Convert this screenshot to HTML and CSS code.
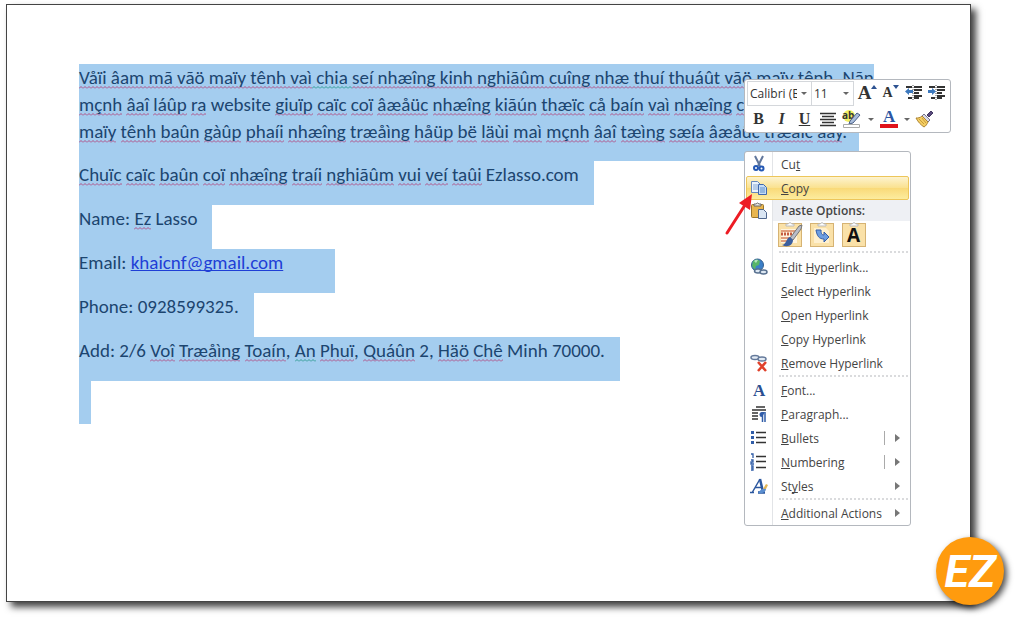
FILE: index.html
```html
<!DOCTYPE html>
<html lang="vi">
<head>
<meta charset="utf-8">
<meta name="viewport" content="width=device-width, initial-scale=1">
<title>Copy text in Word</title>
<link rel="stylesheet" href="styles.css">
</head>
<body>
<main class="sheet">
  <article class="doc">
    <p class="lines">
      <span class="line"><u>Våïi âam mã vãö maïy tênh vaì</u><u class="grammar"> chia </u><u>seí nhæîng kinh nghiãûm cuîng nhæ thuí thuáût vãö maïy tênh.</u> <u>Nãn</u></span>
      <span class="line"><u>mçnh</u> <u>âaî</u> <u>láûp</u> <u>ra</u> website <u>giuïp</u> <u>caïc</u> <u>coï</u> <u>âæåüc</u> <u>nhæîng</u> <u>kiãún</u> <u>thæïc</u> <u>cå</u> <u>baín</u> <u>vaì</u> <u>nhæîng</u> <u>caïch</u> <u>maì</u></span>
      <span class="line"><u>maïy</u> <u>tênh</u> <u>baûn</u> <u>gàûp</u> <u>phaíi</u> <u>nhæîng</u> <u>træåìng</u> <u>håüp</u> <u>bë</u> <u>läùi</u> <u>maì</u> <u>mçnh</u> <u>âaî</u> <u>tæìng</u> <u>sæía</u> <u>âæåüc</u> <u>træåïc</u> <u>âáy</u>.</span>
    </p>
    <p><u>Chuïc</u> <u>caïc</u> <u>baûn</u> <u>coï</u> <u>nhæîng</u> <u>traíi</u> <u>nghiãûm</u> <u>vui</u> <u>veí</u> <u>taûi</u> Ezlasso.com</p>
    <p>Name: <u>Ez</u> Lasso</p>
    <p class="trailing">Email: <a href="mailto:khaicnf@gmail.com">khaicnf@gmail.com</a></p>
    <p>Phone: 0928599325.</p>
    <p>Add: 2/6 <u>Voî</u> <u>Træåìng</u> <u>Toaín</u>, <u class="grammar">An</u> <u>Phuï</u>, <u>Quáûn</u> 2, <u>Häö</u> <u>Chê</u> Minh 70000.</p>
    <p class="empty"></p>
  </article>

  <section class="toolbar" aria-label="Formatting">
    <div class="row">
      <label class="combo name"><select aria-label="Font"><option>Calibri (Body)</option></select></label>
      <label class="combo size"><select aria-label="Font size"><option>11</option></select></label>
      <button class="tool" aria-label="Grow font"><span class="grow">A</span><svg class="tip" width="6" height="4" viewBox="0 0 6 4"><path d="M0 4 3 0l3 4z" fill="#2d5291"/></svg></button>
      <button class="tool" aria-label="Shrink font"><span class="shrink">A</span><svg class="tip" width="6" height="4" viewBox="0 0 6 4"><path d="M0 0h6L3 4z" fill="#2d5291"/></svg></button>
      <button class="tool" aria-label="Decrease indent"><svg width="18" height="18" viewBox="0 0 18 18"><path d="M1 3h6M9 3h8M9 6h8M9 9h5M9 12h8M3 14h4M9 14h5" stroke="#333" stroke-width="2"/><path d="M8 1v16" stroke="#555" stroke-dasharray="1 1"/><path d="M0 7.500 4 4v2h4v3H4v2z" fill="#3c78bd"/></svg></button>
      <button class="tool" aria-label="Increase indent"><svg width="18" height="18" viewBox="0 0 18 18"><path d="M1 3h6M9 3h8M9 6h8M9 9h5M9 12h8M3 14h4M9 14h5" stroke="#333" stroke-width="2"/><path d="M8 1v16" stroke="#555" stroke-dasharray="1 1"/><path d="M8 7.500 4 4v2H0v3h4v2z" fill="#3c78bd"/></svg></button>
    </div>
    <div class="row">
      <button class="tool letter bold" aria-label="Bold">B</button>
      <button class="tool letter italic" aria-label="Italic">I</button>
      <button class="tool letter underline" aria-label="Underline">U</button>
      <button class="tool" aria-label="Center"><svg width="16" height="14" viewBox="0 0 16 14"><path d="M0 1.500h16M2 4.500h12M0 7.500h16M2 10.500h12M0 13.500h16" stroke="#333" stroke-width="1.500"/></svg></button>
      <button class="tool split" aria-label="Highlight color"><svg width="20" height="20" viewBox="0 0 20 20"><circle cx="7" cy="7" r="6" fill="#f3ef62"/><text x="0" y="10" font-size="10" font-weight="bold" fill="#333">ab</text><path d="m8 12 7-8 3 2-7 8-4 1z" fill="#a9bddb" stroke="#495f86"/><path d="M1.500 15.500h16v3h-16z" fill="#fff" stroke="#aaa"/></svg><i class="drop"></i></button>
      <button class="tool split" aria-label="Font color"><svg width="18" height="20" viewBox="0 0 18 20"><text class="serif" x="3" y="13" font-size="17" font-weight="bold" fill="#2c56a3">A</text><path d="M0 15h18v4H0z" fill="#e0131b"/></svg><i class="drop"></i></button>
      <button class="tool" aria-label="Format painter"><svg width="19" height="18" viewBox="0 0 19 18"><path d="m12 5 4-4 2 2-4 4z" fill="#594a7d" stroke="#443963"/><path d="m9 4 6 6-2 2-6-6z" fill="#d9d9e4" stroke="#77758b"/><path d="M7 6c-2 2-4 2-6 2 2 4 5 7 8 9 2-1 3-3 4-5z" fill="#f4ce62" stroke="#ae8431"/><path d="m4 9 5 5M7 8l4 5" stroke="#c89a3b"/></svg></button>
    </div>
  </section>

  <nav class="menu" aria-label="Context menu">
    <button class="item"><svg class="icon" viewBox="0 0 18 18"><path d="m5 1 5 10M13 1 8 11" stroke="#61779c" stroke-width="2"/><circle cx="6" cy="13" r="2" fill="#fff" stroke="#2458b4" stroke-width="2"/><circle cx="11.500" cy="13.500" r="2" fill="#fff" stroke="#2458b4" stroke-width="2"/></svg><span>Cu<b>t</b></span></button>
    <button class="item active"><svg class="icon" viewBox="0 0 18 18"><path d="M1.500 2.500h6l3 3v8h-9z" fill="#e9f2fc" stroke="#6688bc"/><path d="M3 6h5M3 8h5M3 10h5" stroke="#86a9d6"/><path d="M8.500 5.500h5l3 3v7h-8z" fill="#c5dcf5" stroke="#3e68ad"/><path d="M10 9h5M10 11h5M10 13h5" stroke="#5f8fca"/></svg><span><b>C</b>opy</span></button>
    <div class="item heading"><svg class="icon" viewBox="0 0 18 18"><rect x="1.500" y="2.500" width="12" height="13" rx="1" fill="#e8b650" stroke="#9c7628"/><path d="M4 4V2h2q1.500-2 3 0h2v2z" fill="#eee" stroke="#666"/><path d="M8.500 7.500h5l3 3v6h-8z" fill="#d9e5f3" stroke="#4f668d"/></svg><span>Paste Options:</span></div>
    <div class="paste">
      <button aria-label="Keep source formatting"><svg width="26" height="27" viewBox="0 0 26 27"><rect x="1.500" y="2.500" width="23" height="23" fill="#fae1a8" stroke="#d6b373"/><path d="M9 5V3h2q2-3 4 0h2v2z" fill="#fff" stroke="#bbb"/><path d="M4 8h16v14H4z" fill="#fff4df"/><path d="M4 10h15M4 17h9M4 20h8" stroke="#d7835c" stroke-width="1.500"/><path d="M4 13h14" stroke="#c55c3f" stroke-width="3" stroke-dasharray="2 1"/><path d="m13 17 9-12 3-1-1 4-8 11z" fill="#b9bdc8" stroke="#777"/><path d="M13 16c-4 1-3 7-8 8 6 3 11 0 11-5z" fill="#3c5f9e"/></svg></button>
      <button aria-label="Merge formatting"><svg width="26" height="27" viewBox="0 0 26 27"><rect x="1.500" y="2.500" width="23" height="23" fill="#fae1a8" stroke="#d6b373"/><path d="M9 5V3h2q2-3 4 0h2v2z" fill="#fff" stroke="#bbb"/><path d="M5 7h12l3 3v12H5z" fill="#fff0ce"/><path d="M7 9h5c0 4 1 5 3 5v-3l5 5-5 5v-3C10 18 8 15 7 9z" fill="#6d9de0" stroke="#345da8"/></svg></button>
      <button aria-label="Keep text only"><svg width="26" height="27" viewBox="0 0 26 27"><rect x="1.500" y="2.500" width="23" height="23" fill="#fae1a8" stroke="#d6b373"/><path d="M9 5V3h2q2-3 4 0h2v2z" fill="#fff" stroke="#bbb"/><text x="6" y="21" font-size="19" font-weight="bold" fill="#111">A</text></svg></button>
    </div>
    <hr>
    <button class="item"><svg class="icon" viewBox="0 0 18 18"><circle cx="7.500" cy="7" r="6" fill="#3b7fc8" stroke="#35608f"/><path d="M3 3q4-3 7 0l-1 4-3 1-1 4-3-4z" fill="#58b568"/><path d="M4 3q2-2 4-1L6 5z" fill="#b6e6c0"/><g fill="#dce7f2" stroke="#566f8e" stroke-width="1.500"><ellipse cx="8" cy="13" rx="3.500" ry="2"/><ellipse cx="13.500" cy="14" rx="3.500" ry="2"/></g></svg><span>Edit <b>H</b>yperlink...</span></button>
    <button class="item"><i></i><span><b>S</b>elect Hyperlink</span></button>
    <button class="item"><i></i><span><b>O</b>pen Hyperlink</span></button>
    <button class="item"><i></i><span><b>C</b>opy Hyperlink</span></button>
    <button class="item"><svg class="icon" viewBox="0 0 18 18"><g fill="#e3ebf4" stroke="#64799a" stroke-width="1.500"><ellipse cx="5" cy="3.500" rx="4" ry="2"/><ellipse cx="12" cy="5" rx="4" ry="2"/></g><path d="m8 8 8 9M16 8l-8 9" stroke="#e0412b" stroke-width="2.500"/></svg><span><b>R</b>emove Hyperlink</span></button>
    <hr>
    <button class="item"><svg class="icon" viewBox="0 0 18 18"><text class="serif" x="3" y="15" font-size="17" font-weight="bold" fill="#2b4f91">A</text></svg><span><b>F</b>ont...</span></button>
    <button class="item"><svg class="icon" viewBox="0 0 18 18"><path d="M6 2h9M2 5h14M2 8h6M2 11h6M2 14h6" stroke="#333" stroke-width="1.500"/><path d="M15 7h-3a2.500 2.500 0 0 0 0 5z" fill="#315da8"/><path d="M12.500 7v10M15 7v10" stroke="#315da8" stroke-width="1.500"/></svg><span><b>P</b>aragraph...</span></button>
    <button class="item"><svg class="icon" viewBox="0 0 18 18"><path d="M1 2h3v3H1zM1 7h3v3H1zM1 12h3v3H1z" fill="#315da8"/><path d="M6 3.500h10M6 8.500h10M6 13.500h10" stroke="#333" stroke-width="1.500"/></svg><span><b>B</b>ullets</span><i class="bar"></i><i class="more"></i></button>
    <button class="item"><svg class="icon" viewBox="0 0 18 18"><path d="M1 1h2v4M1 7h2v2H1v2h3M1 13h2v4H1M1 15h2" fill="none" stroke="#315da8" stroke-width="1.300"/><path d="M6 3.500h10M6 8.500h10M6 14.500h10" stroke="#333" stroke-width="1.500"/></svg><span><b>N</b>umbering</span><i class="bar"></i><i class="more"></i></button>
    <button class="item"><svg class="icon" viewBox="0 0 18 18"><path d="M0 15.500h4M2.500 15 10 2" fill="none" stroke="#2b579f" stroke-width="1.500"/><path d="m10 2 3 13M8 15.500h7" stroke="#2b579f" stroke-width="2.500"/><path d="M5 10.500h7" stroke="#2b579f" stroke-width="1.500"/><path d="m13 12 3-5 2 1-3 6z" fill="#e4b656"/><path d="M8 16q3-5 8-4-1 5-8 4z" fill="#5a8ed0"/></svg><span>St<b>y</b>les</span><i class="more"></i></button>
    <hr>
    <button class="item"><i></i><span><b>A</b>dditional Actions</span><i class="more"></i></button>
  </nav>

  <svg class="pointer" width="30" height="42" viewBox="0 0 30 42"><path d="M2 39 20 11" stroke="#ed1c24" stroke-width="3" stroke-linecap="round"/><path d="m27 0-2 16-11-7z" fill="#ed1c24"/></svg>
  <div class="logo">EZ</div>
</main>
</body>
</html>
```

FILE: styles.css
```css
* { box-sizing: border-box; }

body {
  margin: 0;
  min-height: 100vh;
  display: flex;
  padding: 4px 53px 16px 6px;
  background: #fff;
  font-family: "Open Sans", "Noto Sans", sans-serif;
}

button, select {
  margin: 0;
  padding: 0;
  border: 0;
  background: none;
  color: inherit;
  font: inherit;
}

svg { overflow: visible; }

.sheet {
  position: relative;
  flex: 1;
  padding: 59px 72px;
  border: 1px solid #444;
  background: #fff;
  box-shadow: 5px 5px 7px rgba(0, 0, 0, 0.75);
}

.doc {
  color: #1c456f;
  font-family: Carlito, Lato, "Open Sans", sans-serif;
  font-size: 19px;
  line-height: 27px;
  white-space: nowrap;
}

.doc p {
  width: fit-content;
  margin: 0;
  padding: 0 15px 17px 0;
  background: #a4cdef;
}

.doc p.trailing { padding-right: 52px; }

.doc p.empty {
  width: 12px;
  height: 43px;
  padding: 0;
}

.doc p.lines {
  padding: 0;
  background: none;
}

.line {
  display: block;
  width: fit-content;
  background: #a4cdef;
}

.line:last-child { padding: 0 12px 16px 0; }

.doc u {
  background: url("data:image/svg+xml,%3Csvg xmlns='http://www.w3.org/2000/svg' width='4' height='3'%3E%3Cpath d='M0 2.500 2 .5l2 2' fill='none' stroke='%23b04f86'/%3E%3C/svg%3E") left bottom repeat-x;
  text-decoration: none;
}

.doc u.grammar {
  background-image: url("data:image/svg+xml,%3Csvg xmlns='http://www.w3.org/2000/svg' width='4' height='3'%3E%3Cpath d='M0 2.500 2 .5l2 2' fill='none' stroke='%232f9c94'/%3E%3C/svg%3E");
}

.doc a { color: #1f3fd6; text-decoration-skip-ink: none; }

.toolbar {
  position: absolute;
  top: 74px;
  left: 737px;
  width: 207px;
  padding: 0 2px;
  border: 1px solid #b4b8be;
  border-radius: 3px;
  background: #fff;
  color: #333;
}

.row {
  display: flex;
  align-items: center;
  height: 26px;
}

.combo {
  display: flex;
  align-items: center;
  height: 25px;
  border: 1px solid #d4d7db;
  font-size: 12px;
}

.combo + .combo { border-left: 0; }
.combo.name { width: 65px; }
.combo.size { width: 42px; margin-right: 2px; }

.combo select {
  appearance: none;
  flex: 1;
  min-width: 0;
  padding-left: 2px;
  overflow: hidden;
  text-overflow: clip;
}

.combo::after, .drop {
  content: "";
  margin: 0 4px;
  border: 3px solid transparent;
  border-top-color: #666;
  border-bottom: 0;
}

.tool {
  display: flex;
  align-items: center;
  justify-content: center;
  width: 23px;
  height: 24px;
}

.tool.split { width: 37px; }
.split .drop { margin: 0 0 0 6px; }
.tip { align-self: flex-start; margin-top: 4px; }

.grow, .shrink, .letter, .serif {
  font-family: "Liberation Serif", serif;
  font-weight: bold;
}

.grow { font-size: 19px; }
.shrink { font-size: 14px; }
.letter { font-size: 16px; }
.italic { font-style: italic; }
.underline { text-decoration: underline; }

.menu {
  position: absolute;
  top: 146px;
  left: 737px;
  width: 167px;
  border: 1px solid #b4b8be;
  border-radius: 3px;
  background: linear-gradient(90deg, #fff 27px, #e2e4e7 27px, #e2e4e7 28px, #fff 28px);
  color: #444;
  font-size: 12px;
}

.item {
  display: flex;
  align-items: center;
  width: 100%;
  height: 24px;
  padding: 0 10px 0 5px;
  text-align: left;
  white-space: nowrap;
}

.item > :first-child {
  flex: none;
  width: 18px;
  height: 18px;
  margin-right: 13px;
}

.item > span { flex: 1; }

.item b {
  font-weight: inherit;
  text-decoration: underline;
  text-decoration-skip-ink: none;
}

.item.active {
  width: auto;
  min-width: calc(100% - 2px);
  margin: 0 1px;
  border: 1px solid #edc65a;
  border-radius: 2px;
  padding: 0 8px 0 3px;
  background: linear-gradient(#fdf3cf, #fae18e 50%, #f9d978 50%, #fcec9e);
}

.item.heading {
  height: 21px;
  background: linear-gradient(90deg, transparent 28px, #eef0f4 28px);
  font-weight: 600;
}

.paste {
  display: flex;
  gap: 6px;
  height: 30px;
  padding: 0 0 0 32px;
}

.paste button { display: flex; }

hr {
  height: 3px;
  margin: 0 2px 0 34px;
  border: 0;
  border-top: 2px dotted #dadbdd;
}

.paste + hr { height: 4px; }

.bar {
  width: 1px;
  height: 14px;
  margin-right: 10px;
  background: #aaa;
}

.more {
  border: 4px solid transparent;
  border-left: 5px solid #777;
  border-right: 0;
}

.pointer {
  position: absolute;
  top: 189px;
  left: 718px;
}

.logo {
  position: absolute;
  right: -34px;
  bottom: -4px;
  display: flex;
  align-items: center;
  justify-content: center;
  width: 68px;
  height: 68px;
  border-radius: 50%;
  background: #ff9b0e;
  box-shadow: 3px 3px 6px rgba(0, 0, 0, 0.7);
  color: #fff;
  font: italic bold 45px "Liberation Sans Narrow", Roboto, sans-serif;
}
```
